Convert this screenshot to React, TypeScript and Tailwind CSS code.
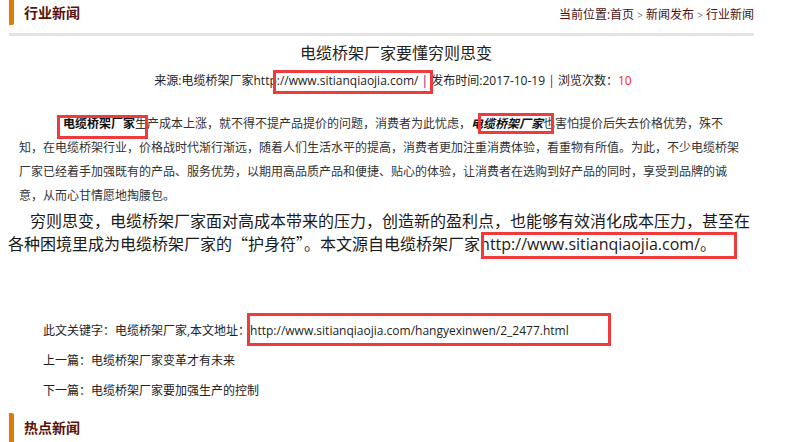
import React from "react";

const Box = ({ l, t, w, h }: { l: number; t: number; w: number; h: number }) => (
  <div
    className="absolute border-[3px] border-[#ef3b3b] pointer-events-none"
    style={{ left: l, top: t, width: w, height: h }}
  />
);

const Q = ({ c }: { c: string }) => <span className="font-['Noto_Sans_CJK_SC',sans-serif]">{c}</span>;

export default function App() {
  return (
    <div className="relative w-[806px] h-[442px] overflow-hidden bg-white text-[#222] font-['Open_Sans','Noto_Sans_CJK_SC',sans-serif]">
      {/* header */}
      <div className="ml-[9px] w-[745px] h-[36px] border-b-[3px] border-[#e3e3e3] flex justify-between">
        <div className="flex items-start">
          <div className="w-[5px] h-[25px] bg-[#dc7b07] rounded-br-[2px]" />
          <div className="ml-[10px] mt-[4px] text-[14px] leading-[18px] font-bold text-[#5a1208]">行业新闻</div>
        </div>
        <div className="mt-[6px] text-[12px] leading-[18px] text-[#4a1010] whitespace-nowrap">
          当前位置:首页 <span className="text-[10px] text-[#777]">&gt;</span> 新闻发布{" "}
          <span className="text-[10px] text-[#777]">&gt;</span> 行业新闻
        </div>
      </div>

      {/* article */}
      <div className="ml-[9px] w-[774px]">
        <h1 className="mt-[5px] text-center text-[16px] leading-[24px] font-normal text-[#222]">
          电缆桥架厂家要懂穷则思变
        </h1>
        <div className="mt-[6px] text-center text-[12px] leading-[20px] whitespace-nowrap pr-[6px]">
          来源:电缆桥架厂家http://www.sitianqiaojia.com/ <span className="text-[#800080]">|</span>{" "}
          发布时间:2017-10-19 <span className="text-[#800080]">|</span> 浏览次数：
          <span className="text-[#ff1a1a]">10</span>
        </div>
      </div>

      <div className="mt-[21px] ml-[19px] text-[12px] leading-[24px] text-[#333] whitespace-nowrap">
        <div className="pl-[44px]">
          <b className="text-[#111]">电缆桥架厂家</b>生产成本上涨，就不得不提产品提价的问题，消费者为此忧虑，
          <b className="italic text-[#111]">电缆桥架厂家</b>也害怕提价后失去价格优势，殊不
        </div>
        <div>知，在电缆桥架行业，价格战时代渐行渐远，随着人们生活水平的提高，消费者更加注重消费体验，看重物有所值。为此，不少电缆桥架</div>
        <div>厂家已经着手加强既有的产品、服务优势，以期用高品质产品和便捷、贴心的体验，让消费者在选购到好产品的同时，享受到品牌的诚</div>
        <div>意，从而心甘情愿地掏腰包。</div>
      </div>

      <div className="mt-[2px] ml-[8px] text-[16px] leading-[22px] text-[#1a1a1a] whitespace-nowrap">
        <div className="pl-[22px]">穷则思变，电缆桥架厂家面对高成本带来的压力，创造新的盈利点，也能够有效消化成本压力，甚至在</div>
        <div>
          各种困境里成为电缆桥架厂家的<Q c="“" />护身符<Q c="”" />。本文源自电缆桥架厂家http://www.sitianqiaojia.com/。
        </div>
      </div>

      <div className="mt-[61px] ml-[43px] text-[12px] leading-[30px] text-[#222] whitespace-nowrap">
        <div>此文关键字：电缆桥架厂家,本文地址：http://www.sitianqiaojia.com/hangyexinwen/2_2477.html</div>
        <div>上一篇：电缆桥架厂家变革才有未来</div>
        <div>下一篇：电缆桥架厂家要加强生产的控制</div>
      </div>

      <div className="mt-[7px] ml-[9px] flex items-start">
        <div className="w-[5px] h-[30px] bg-[#dc7b07] rounded-tr-[2px]" />
        <div className="ml-[10px] mt-[6px] text-[14px] leading-[18px] font-bold text-[#5a1208]">热点新闻</div>
      </div>

      <Box l={273} t={70} w={160} h={24} />
      <Box l={57} t={115} w={91} h={24} />
      <Box l={478} t={113} w={76} h={21} />
      <Box l={481} t={232} w={256} h={27} />
      <Box l={247} t={313} w={364} h={33} />
    </div>
  );
}
